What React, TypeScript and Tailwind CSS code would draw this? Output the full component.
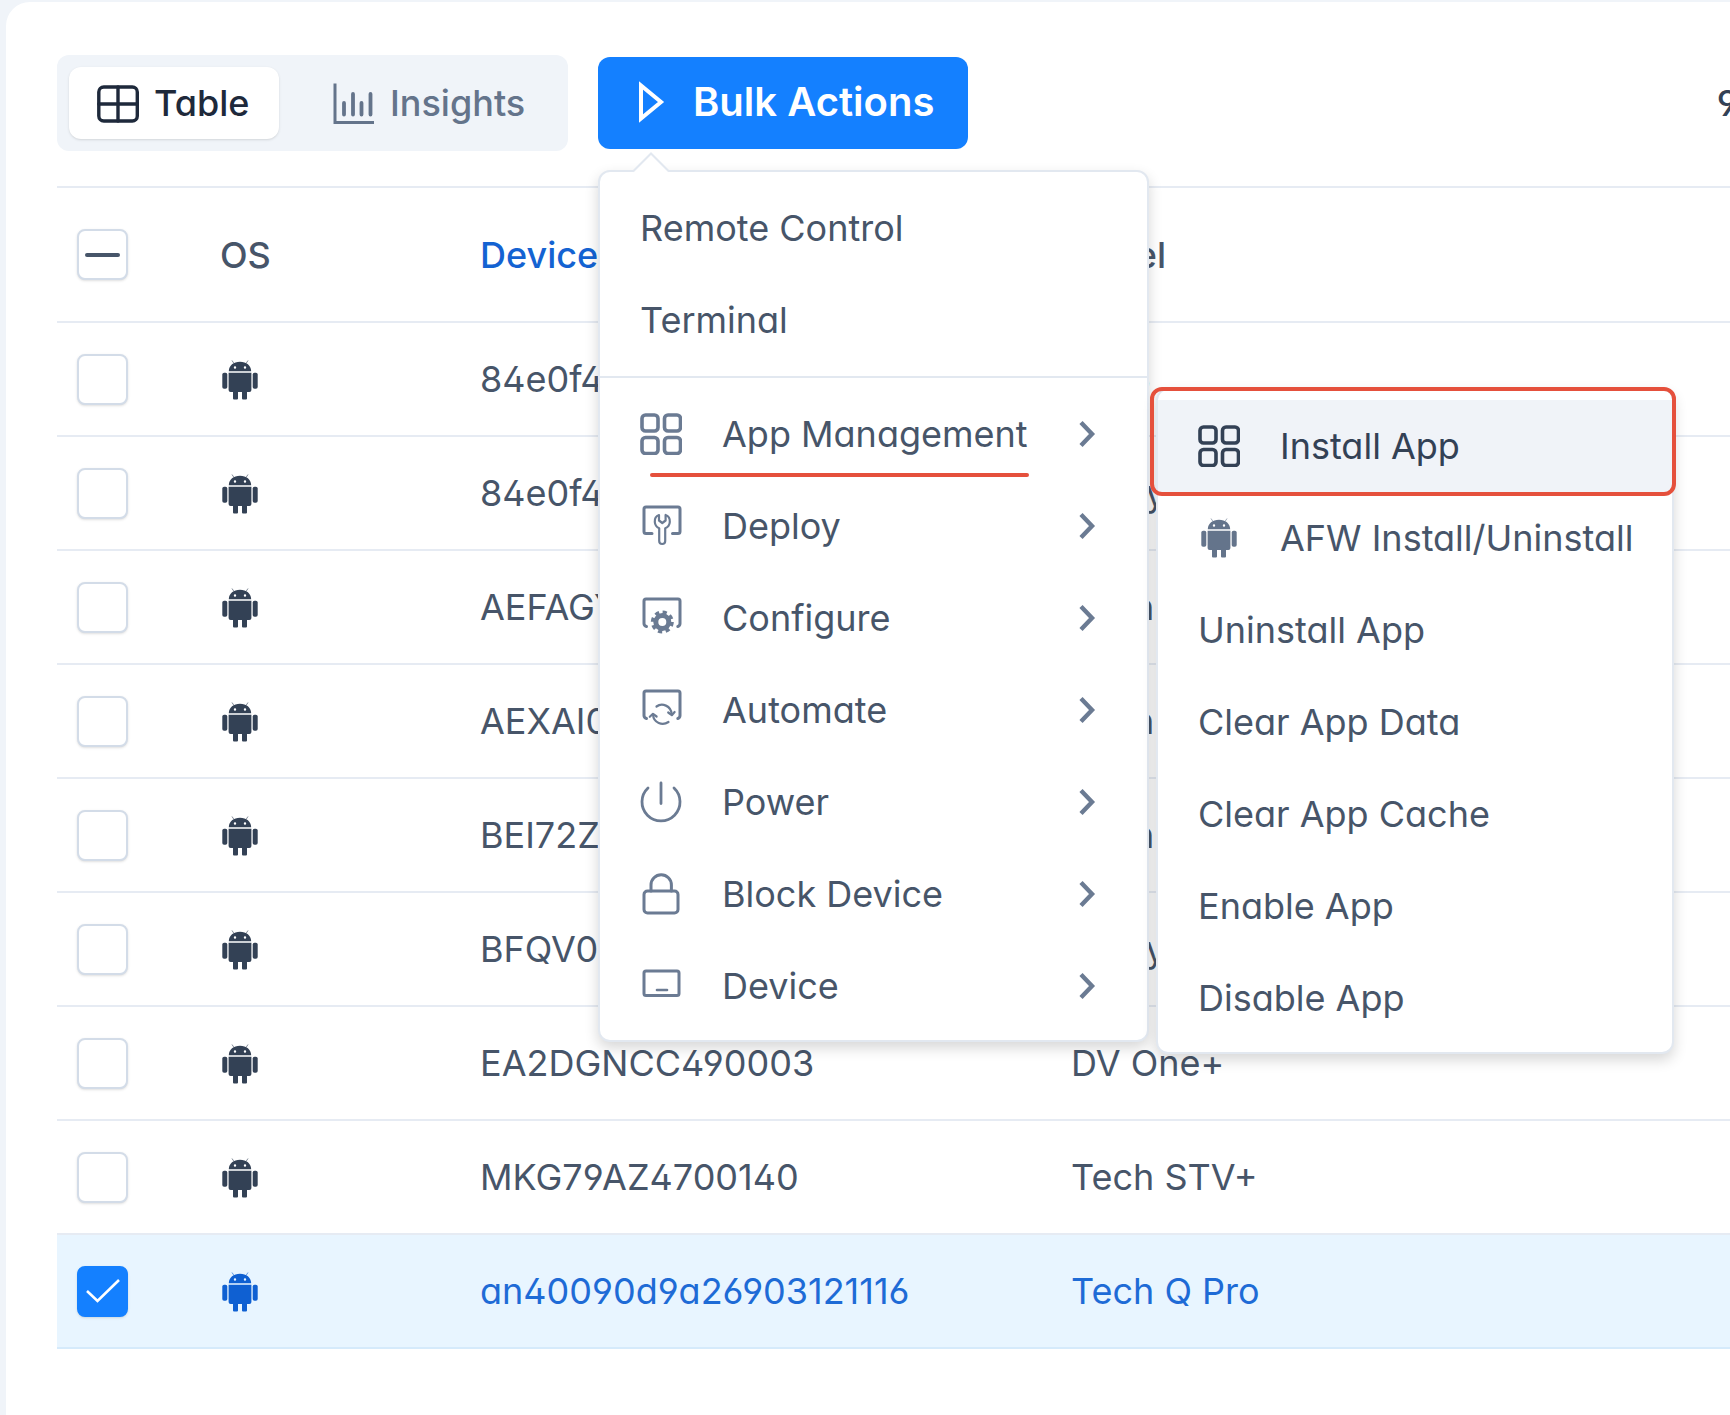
import { ReactNode } from "react";
import clsx from "clsx";

type IconProps = { className?: string };

const AndroidIcon = ({ className }: IconProps) => (
  <svg viewBox="0 0 36 40" className={clsx("h-10 w-9", className)} fill="currentColor">
    <path d="M10 0.5 12 3.5M26 0.5 24 3.5" stroke="currentColor" strokeWidth="1" opacity="0.6" />
    <path
      fillRule="evenodd"
      d="M6.8 11.2C7 5.5 11.5 1.8 18 1.8S29 5.5 29.2 11.2ZM13 6.3a1.2 1.2 0 1 0 0 2.4 1.2 1.2 0 0 0 0-2.4ZM23 6.3a1.2 1.2 0 1 0 0 2.4 1.2 1.2 0 0 0 0-2.4Z"
    />
    <path d="M6.6 12.8H29.4V30a2 2 0 0 1-2 2H25v6.5a1 1 0 0 1-1 1h-3a1 1 0 0 1-1-1V32h-4v6.5a1 1 0 0 1-1 1h-3a1 1 0 0 1-1-1V32H8.6a2 2 0 0 1-2-2Z" />
    <rect x="0.3" y="12.8" width="5" height="16" rx="1.8" />
    <rect x="30.7" y="12.8" width="5" height="16" rx="1.8" />
  </svg>
);

const Outline = ({ children, className }: IconProps & { children: ReactNode }) => (
  <svg
    viewBox="0 0 42 42"
    className={clsx("size-[42px] shrink-0", className)}
    fill="none"
    stroke="currentColor"
    strokeWidth="3"
    strokeLinecap="round"
    strokeLinejoin="round"
  >
    {children}
  </svg>
);

const GridIcon = () => (
  <Outline>
    <g strokeWidth="3.6">
      <rect x="2" y="2" width="16" height="16" rx="3.5" />
      <rect x="24.5" y="2" width="16" height="16" rx="3.5" />
      <rect x="2" y="24.5" width="16" height="16" rx="3.5" />
      <rect x="24.5" y="24.5" width="16" height="16" rx="3.5" />
    </g>
  </Outline>
);

const DeployIcon = () => (
  <Outline>
    <path d="M12 28.5H6a2 2 0 0 1-2-2V4a2 2 0 0 1 2-2H38a2 2 0 0 1 2 2V26.5a2 2 0 0 1-2 2H32.5" />
    <path
      strokeWidth="2.2"
      d="M19 10C16 11 14.6 14 14.8 17C15 20 16.8 22.2 19.2 23.2V36a3 3 0 0 0 6 0V23.2C27.8 22.2 29.6 20 29.8 17C30 14 28.5 11 25.6 10V15.5L22.3 18L19 15.5Z"
    />
  </Outline>
);

const ConfigureIcon = () => (
  <Outline>
    <path d="M6.5 29.5C4.8 29 4 28 4 26.5V4a2 2 0 0 1 2-2H38a2 2 0 0 1 2 2V26.5C40 28 39.5 29 37.8 29.5" />
    <circle cx="22.3" cy="25" r="6.5" strokeWidth="5" />
    <circle cx="22.3" cy="25" r="9.8" strokeWidth="3.4" strokeLinecap="butt" strokeDasharray="4.2 3.5" />
  </Outline>
);

const AutomateIcon = () => (
  <Outline>
    <path d="M6.5 29.5C4.8 29 4 28 4 26.5V4a2 2 0 0 1 2-2H38a2 2 0 0 1 2 2V26.5C40 28 39.5 29 37.8 29.5" />
    <g strokeWidth="2.2">
      <path d="M16.5 17.5C22 13.5 31 16.5 31.8 25.5" />
      <path d="M28.2 23.5 31.8 26.2 34.6 23" />
      <path d="M28.5 33C22.5 37 13.5 34.2 13 25.5" />
      <path d="M9.8 27.8 13 24.8 16.6 27.5" />
    </g>
  </Outline>
);

const PowerIcon = () => (
  <Outline>
    <path d="M21 2V22.5M8 7A19 19 0 1 0 34 7" strokeWidth="2.8" />
  </Outline>
);

const LockIcon = () => (
  <Outline>
    <rect x="4" y="18" width="34" height="22" rx="3.5" />
    <path d="M11 18V12a10.2 10.2 0 0 1 20.4 0V18" />
  </Outline>
);

const DeviceIcon = () => (
  <Outline>
    <rect x="4" y="6" width="35" height="24.5" rx="2" />
    <path d="M17 25H27" strokeWidth="2.6" />
  </Outline>
);

const TableIcon = () => (
  <Outline className="mt-0.5">
    <rect x="1.8" y="4" width="38.5" height="34" rx="5" strokeWidth="3.4" />
    <path d="M21 4V38M1.8 21H40.2" strokeWidth="3.4" />
  </Outline>
);

const InsightsIcon = () => (
  <Outline className="mt-0.5">
    <path d="M2 0.5V39.5H41" strokeLinejoin="miter" strokeLinecap="butt" />
    <path d="M11 20V31.5M20 11V31.5M28.5 20V31.5M37.5 11V31.5" strokeWidth="3.8" />
  </Outline>
);

const ChevronRight = () => (
  <svg viewBox="0 0 18 28" className="h-7 w-[18px] text-[#6b7b93]" fill="none" stroke="currentColor" strokeWidth="4.4">
    <path d="M3 2.5 14 14 3 25.5" />
  </svg>
);

const menuItems = [
  { label: "App Management", Icon: GridIcon },
  { label: "Deploy", Icon: DeployIcon },
  { label: "Configure", Icon: ConfigureIcon },
  { label: "Automate", Icon: AutomateIcon },
  { label: "Power", Icon: PowerIcon },
  { label: "Block Device", Icon: LockIcon },
  { label: "Device", Icon: DeviceIcon },
];

const appActions = ["Uninstall App", "Clear App Data", "Clear App Cache", "Enable App", "Disable App"];

const devices = [
  { name: "84e0f4", model: "TX 5" },
  { name: "84e0f4", model: "Relay" },
  { name: "AEFAGY", model: "Tech" },
  { name: "AEXAI0", model: "Tech" },
  { name: "BEI72Z", model: "Tech" },
  { name: "BFQV0", model: "Relay" },
  { name: "EA2DGNCC490003", model: "DV One+" },
  { name: "MKG79AZ4700140", model: "Tech STV+" },
  { name: "an40090d9a26903121116", model: "Tech Q Pro", selected: true },
];

const rowClass = "flex h-[92px] w-full items-center pl-10 text-left";

const Checkbox = ({ label, checked, mixed }: { label: string; checked?: boolean; mixed?: boolean }) => (
  <span className="grid size-[51px] *:col-start-1 *:row-start-1">
    <input
      type="checkbox"
      aria-label={label}
      defaultChecked={checked}
      className="size-full appearance-none rounded-lg border-2 border-[#d3dce8] bg-white shadow-sm checked:border-[#1480ff] checked:bg-[#1480ff]"
    />
    {mixed && <span className="pointer-events-none h-1 w-[35px] place-self-center rounded-xs bg-[#475569]" />}
    {checked && (
      <svg
        viewBox="0 0 34 24"
        className="pointer-events-none h-6 w-[34px] place-self-center"
        fill="none"
        stroke="white"
        strokeWidth="2.6"
      >
        <path d="M1 12 11.5 22 33 1" />
      </svg>
    )}
  </span>
);

const AppSubmenu = () => (
  <div className="absolute top-0 left-full ml-[9px] w-[518px] rounded-xl border-2 border-[#e2e8f0] bg-white pt-2.5 pb-2 shadow-[0_6px_14px_rgba(0,0,0,0.16)]">
    <div className="relative">
      <button className={clsx(rowClass, "gap-10 bg-[#f0f3f8] text-[#334155]")}>
        <GridIcon />
        Install App
      </button>
      <span className="pointer-events-none absolute -top-[13px] -right-1 -bottom-1 -left-2 rounded-xl border-4 border-[#e5503c]" />
    </div>
    <button className={clsx(rowClass, "gap-10")}>
      <span className="flex w-[42px] justify-center text-[#64748b]">
        <AndroidIcon />
      </span>
      AFW Install/Uninstall
    </button>
    {appActions.map((label) => (
      <button key={label} className={rowClass}>
        {label}
      </button>
    ))}
  </div>
);

const BulkMenu = () => (
  <div className="absolute top-[113px] left-0 z-10 w-[551px] rounded-xl border-2 border-[#e2e8f0] bg-white text-[#475569] shadow-[0_6px_14px_rgba(0,0,0,0.16)]">
    <svg viewBox="0 0 38 22" className="absolute -top-5 left-8 h-[22px] w-[38px]" fill="white">
      <path d="M1 20 19 2 37 20V22H1Z" />
      <path d="M1 19.5 19 1.5 37 19.5" fill="none" stroke="#e2e8f0" strokeWidth="2" />
    </svg>
    <div className="border-b-2 border-[#e2e8f0] py-2.5">
      <button className={rowClass}>Remote Control</button>
      <button className={rowClass}>Terminal</button>
    </div>
    <div className="pt-2.5 pb-2">
      {menuItems.map(({ label, Icon }, i) => (
        <div key={label} className="relative">
          <button className={clsx(rowClass, "gap-10 pr-[51px]")}>
            <span className="text-[#6b7b93]">
              <Icon />
            </span>
            <span className="flex-1">{label}</span>
            <ChevronRight />
          </button>
          {i === 0 && (
            <>
              <span className="absolute bottom-[3px] left-[50px] h-1 w-[379px] rounded-full bg-[#e5503c]" />
              <AppSubmenu />
            </>
          )}
        </div>
      ))}
    </div>
  </div>
);

const Toolbar = () => (
  <div className="-mr-2 flex items-center justify-between">
    <div className="flex items-center gap-[30px]">
      <div className="flex h-24 items-center gap-3 rounded-xl bg-[#f0f4f9] px-3 font-medium">
        <button className="flex h-[72px] w-[210px] items-center gap-[15px] rounded-xl bg-white pl-7 text-[#1e293b] shadow-sm">
          <TableIcon />
          Table
        </button>
        <button className="flex h-[72px] w-[265px] items-center gap-[15px] pl-[42px] text-[#64748b]">
          <InsightsIcon />
          Insights
        </button>
      </div>
      <div className="relative">
        <button className="flex h-[92px] w-[370px] items-center gap-7 rounded-xl bg-[#1480ff] pb-0.5 pl-10 text-[40px] font-semibold text-white">
          <svg viewBox="0 0 27 42" className="h-[42px] w-[27px]" fill="none" stroke="currentColor" strokeWidth="4">
            <path d="M3 4.5V37.5L23 21Z" />
          </svg>
          Bulk Actions
        </button>
        <BulkMenu />
      </div>
    </div>
    <span className="font-medium text-[#334155]">9</span>
  </div>
);

const DeviceTable = () => (
  <table className="mt-[35px] w-full table-fixed border-collapse text-left text-[#475569]">
    <thead>
      <tr className="h-[135px] border-y-2 border-[#e6ebf3]">
        <th className="w-[163px] pl-5">
          <Checkbox label="Select all devices" mixed />
        </th>
        <th className="w-[260px] font-medium">OS</th>
        <th className="w-[591px] font-medium text-[#1463d2]">Device</th>
        <th className="font-medium">Label</th>
      </tr>
    </thead>
    <tbody>
      {devices.map(({ name, model, selected }, i) => (
        <tr
          key={i}
          className={clsx(
            "h-[114px] border-y-2",
            selected ? "border-[#d5eafb] bg-[#e8f5ff] text-[#1e6bd6]" : "border-[#e6ebf3]"
          )}
        >
          <td className="pl-5">
            <Checkbox label={`Select ${name}`} checked={selected} />
          </td>
          <td className="pt-0.5 pl-0.5">
            <AndroidIcon className={selected ? "text-[#0f60d2]" : "text-[#334155]"} />
          </td>
          <td>{name}</td>
          <td>{model}</td>
        </tr>
      ))}
    </tbody>
  </table>
);

export default function App() {
  return (
    <div className="min-h-screen overflow-hidden bg-[#f0f4f9] pt-0.5 pl-1.5 font-['Inter',sans-serif] text-4xl [font-feature-settings:'cv02','cv03','cv04','cv11']">
      <main className="min-h-screen rounded-tl-3xl bg-white pt-[53px] pl-[51px]">
        <Toolbar />
        <DeviceTable />
      </main>
    </div>
  );
}
